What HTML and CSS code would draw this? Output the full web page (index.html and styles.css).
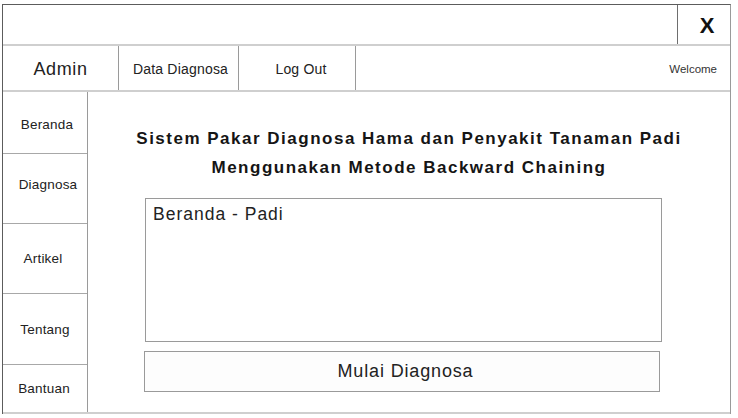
FILE: index.html
```html
<!DOCTYPE html>
<html lang="id">
<head>
<meta charset="utf-8">
<title>Sistem Pakar Padi</title>
<link rel="stylesheet" href="styles.css">
</head>
<body>
<div class="window">
  <div class="titlebar">
    <div class="titlebar-space"></div>
    <div class="close-box"><span class="close-glyph">X</span></div>
  </div>
  <div class="navbar">
    <div class="nav-cell nav-admin">Admin</div>
    <div class="nav-cell nav-data">Data Diagnosa</div>
    <div class="nav-cell nav-logout">Log Out</div>
    <div class="nav-welcome">Welcome</div>
  </div>
  <div class="body-row">
    <ul class="sidebar">
      <li class="side-item side-beranda">Beranda</li>
      <li class="side-item side-diagnosa">Diagnosa</li>
      <li class="side-item side-artikel">Artikel</li>
      <li class="side-item side-tentang">Tentang</li>
      <li class="side-item side-bantuan">Bantuan</li>
    </ul>
    <main class="content">
      <h1 class="heading">Sistem Pakar Diagnosa Hama dan Penyakit Tanaman Padi<br>Menggunakan Metode Backward Chaining</h1>
      <div class="panel">Beranda - Padi</div>
      <button class="start-btn" type="button">Mulai Diagnosa</button>
    </main>
  </div>
</div>
</body>
</html>
```
FILE: styles.css
```css
html, body {
  margin: 0;
  padding: 0;
  background: #ffffff;
}

body {
  font-family: "Liberation Sans", Arial, sans-serif;
  color: #1a1a1a;
}

.window {
  margin: 4px 0 0 2px;
  width: 729px;
  height: 410px;
  border-top: 1px solid #5c5c5c;
  border-left: 1px solid #5c5c5c;
  border-right: 1px solid #9a9a9a;
  display: flex;
  flex-direction: column;
  box-sizing: border-box;
}

/* top window strip with the close box */
.titlebar {
  display: flex;
  height: 39px;
}

.titlebar-space {
  flex: 1;
}

.close-box {
  width: 52px;
  border-left: 1px solid #6e6e6e;
  display: flex;
  align-items: center;
  justify-content: center;
}

.close-glyph {
  font-weight: bold;
  font-size: 22px;
  line-height: 1;
  color: #111;
  padding-top: 2px;
  padding-left: 6px;
}

/* menu bar */
.navbar {
  display: flex;
  height: 44px;
  border-top: 2px solid #cfcfcf;
  border-bottom: 2px solid #cfcfcf;
}

.nav-cell {
  display: flex;
  align-items: center;
  justify-content: center;
  border-right: 1px solid #9a9a9a;
  font-size: 14px;
  letter-spacing: 0.2px;
  color: #222;
  padding-top: 2px;
  box-sizing: border-box;
}

.nav-admin {
  width: 116px;
  font-size: 18px;
  letter-spacing: 0.6px;
}

.nav-data {
  width: 120px;
  padding-left: 4px;
}

.nav-logout {
  width: 117px;
  padding-left: 8px;
}

.nav-welcome {
  flex: 1;
  display: flex;
  align-items: center;
  justify-content: flex-end;
  padding-right: 13px;
  padding-top: 2px;
  font-size: 11.5px;
  color: #333;
}

.body-row {
  flex: 1;
  display: flex;
  border-bottom: 2px solid #cfcfcf;
}

/* left navigation */
.sidebar {
  list-style: none;
  margin: 0;
  padding: 0;
  width: 84px;
  border-right: 1px solid #9a9a9a;
  display: flex;
  flex-direction: column;
}

.side-item {
  display: flex;
  align-items: center;
  justify-content: center;
  font-size: 13.5px;
  letter-spacing: 0.2px;
  color: #222;
  border-bottom: 1px solid #a8a8a8;
  box-sizing: border-box;
}

.side-beranda { height: 62px; padding: 4px 0 0 4px; }
.side-diagnosa { height: 70px; padding: 0 0 8px 6px; }
.side-artikel { height: 70px; padding-right: 4px; }
.side-tentang { height: 71px; }
.side-bantuan { flex: 1; border-bottom: none; padding-right: 2px; }

/* main area */
.content {
  flex: 1;
  display: flex;
  flex-direction: column;
  padding: 32px 0 0 57px;
}

.heading {
  margin: 0 0 0 -57px;
  text-align: center;
  font-size: 17px;
  font-weight: bold;
  line-height: 29px;
  letter-spacing: 1.5px;
  color: #151515;
}

.panel {
  margin-top: 16px;
  width: 517px;
  height: 144px;
  border: 1px solid #9a9a9a;
  padding: 5px 7px;
  box-sizing: border-box;
  font-size: 17.5px;
  letter-spacing: 1px;
  color: #222;
}

.start-btn {
  margin: 9px 0 0 -1px;
  width: 516px;
  height: 41px;
  background: #fdfdfd;
  border: 1px solid #9a9a9a;
  border-radius: 0;
  font-family: "Liberation Sans", Arial, sans-serif;
  font-size: 18px;
  letter-spacing: 0.85px;
  color: #222;
  padding: 0 0 0 7px;
  cursor: pointer;
}
```
